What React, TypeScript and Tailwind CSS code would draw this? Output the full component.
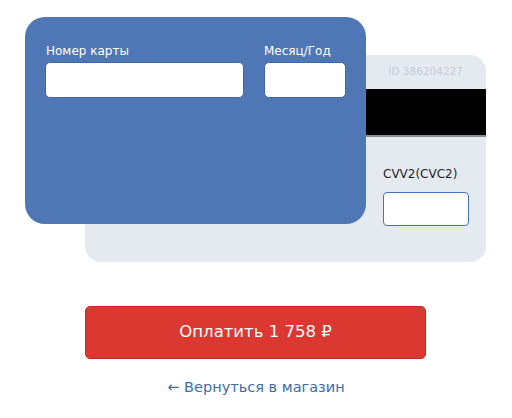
import React from 'react';

const App: React.FC = () => {
  return (
    <div className="w-[512px] h-[418px] bg-white font-['DejaVu_Sans','Verdana',sans-serif]">
      <div className="pt-[17px] pl-[25px]">
        <div className="grid w-[461px]">
          {/* back side of the card */}
          <div className="[grid-area:1/1] ml-[60px] mt-[38px] w-[401px] h-[207px] rounded-[16px] bg-[#e5eaf1] overflow-hidden">
            <div className="h-[34px] flex items-center justify-end pr-[23px] text-[10.5px] text-[#c5cbd3]">
              ID 386204227
            </div>
            <div className="h-[48px] bg-black border-b-2 border-[#8a8d92]" />
            <div className="pl-[298px] pt-[29px]">
              <div className="text-[12px] leading-[16px] text-[#1f1f1f]">CVV2(CVC2)</div>
              <input
                className="mt-[10px] block w-[86px] h-[34px] rounded-[4px] border border-[#4a72b3] bg-white outline-none"
                type="text"
              />
            </div>
          </div>

          {/* front side of the card */}
          <div className="[grid-area:1/1] relative z-10 w-[341px] h-[207px] rounded-[20px] bg-[#4f76b5] pt-[26px] pl-[20px]">
            <div className="flex gap-[20px]">
              <div className="flex flex-col">
                <label className="pl-[1px] text-[12px] leading-[16px] text-white">Номер карты</label>
                <input
                  className="mt-[3px] w-[199px] h-[36px] rounded-[5px] bg-white border border-[#3f66a6] outline-none"
                  type="text"
                />
              </div>
              <div className="flex flex-col">
                <label className="text-[12px] leading-[16px] text-white">Месяц/Год</label>
                <input
                  className="mt-[3px] w-[82px] h-[36px] rounded-[5px] bg-white border border-[#3f66a6] outline-none"
                  type="text"
                />
              </div>
            </div>
          </div>
        </div>
      </div>

      <div className="pl-[85px] pt-[44px]">
        <button className="w-[341px] h-[53px] rounded-[5px] bg-[#db3832] border border-[#c42a25] text-white text-[16.5px]">
          Оплатить 1 758 ₽
        </button>
      </div>

      <div className="mt-[16px] w-[512px] text-center">
        <a href="#" className="text-[14.5px] text-[#3d6bb2]">
          ← Вернуться в магазин
        </a>
      </div>
    </div>
  );
};

export default App;
